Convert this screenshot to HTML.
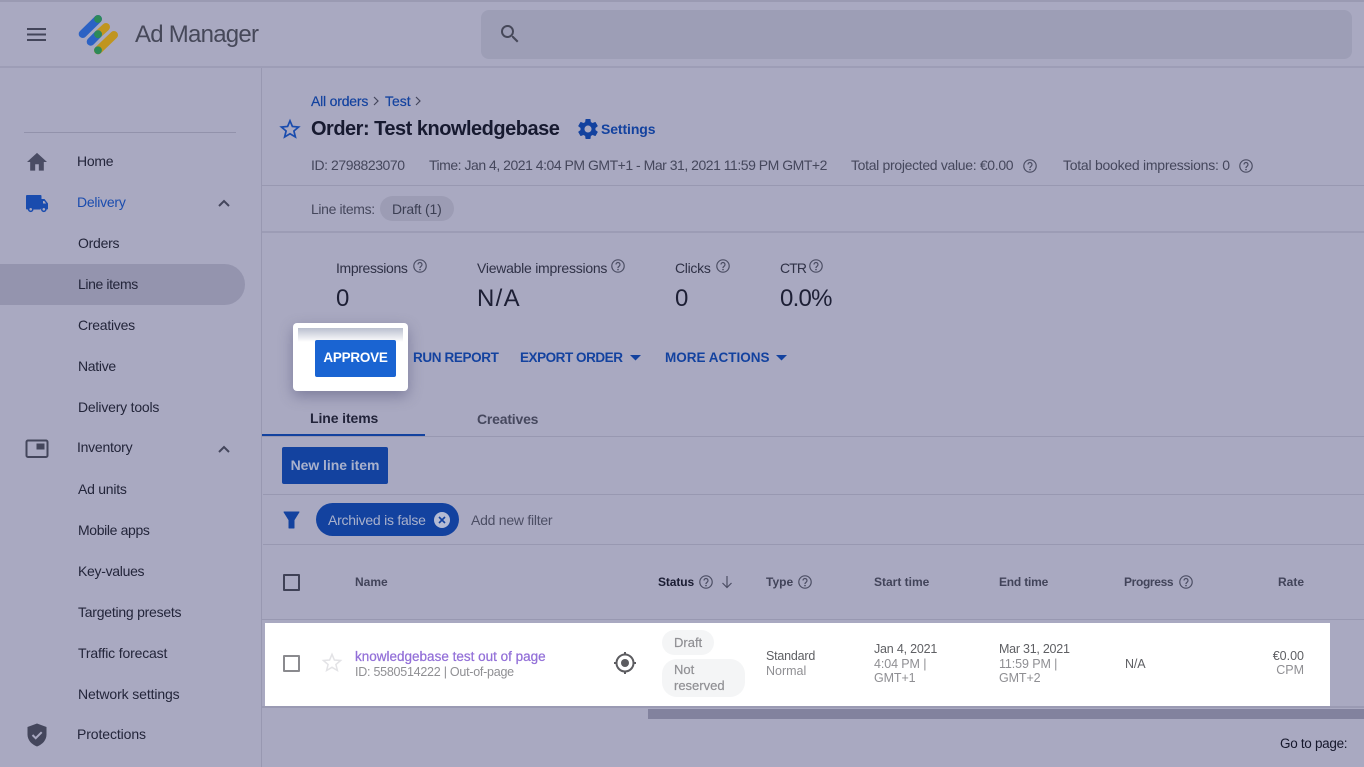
<!DOCTYPE html>
<html><head><meta charset="utf-8"><style>
html,body{margin:0;padding:0;width:1364px;height:767px;overflow:hidden;background:#a9a9c1}
body{position:relative;font-family:"Liberation Sans",sans-serif;color:#3c3f53}
.t{position:absolute;white-space:nowrap;line-height:20px;font-size:14px}
.b{position:absolute}
svg{position:absolute;overflow:visible}
.nav{color:#23253a;font-size:14px;letter-spacing:-.25px}
.bl{color:#13429f}
.bd{font-weight:bold}
.hd{font-size:12px;font-weight:bold;color:#42445a}
.g{color:#8f8f93;font-size:12.5px}
.dk{color:#5f6064;font-size:12.5px}
</style></head><body>
<div class="b" style="left:0;top:0;width:1364px;height:2px;background:#9a9ab2"></div>
<div class="b" style="left:0;top:66px;width:1364px;height:2px;background:#9d9db6"></div>
<div class="b" style="left:261px;top:68px;width:1px;height:699px;background:#9898b1"></div>
<div class="b" style="left:481px;top:10px;width:871px;height:49px;border-radius:8px;background:#9d9eb6"></div>
<!-- menu -->
<svg style="left:27px;top:28px" width="20" height="13"><path d="M0 1h19M0 6.500h19M0 12h19" stroke="#43455a" stroke-width="2"/></svg>
<!-- logo -->
<svg style="left:0;top:0" width="130" height="60"><path d="M98 34.300L106 27M98 50.300L114 35" stroke="#c0951f" stroke-width="8" stroke-linecap="round"/><path d="M82.700 34L98 19M90.700 41.700L98 34.300" stroke="#2c62c4" stroke-width="8" stroke-linecap="round"/><circle cx="98" cy="19" r="3.900" fill="#2d8a58"/><circle cx="98" cy="34.300" r="3.900" fill="#2d8a58"/><circle cx="98" cy="50.300" r="3.900" fill="#2d8a58"/></svg>
<div class="t" style="left:135px;top:21px;font-size:24px;line-height:28px;color:#464859;letter-spacing:-.75px">Ad Manager</div>
<!-- search -->
<svg style="left:498px;top:22px" width="24" height="24" viewBox="0 0 24 24"><path d="M15.500 14h-.79l-.28-.27A6.470 6.470 0 0 0 16 9.500 6.500 6.500 0 1 0 9.500 16c1.610 0 3.090-.59 4.230-1.570l.27.28v.79l5 4.990L20.490 19l-4.990-5zm-6 0C7.010 14 5 11.990 5 9.500S7.010 5 9.500 5 14 7.010 14 9.500 11.990 14 9.500 14z" fill="#464859"/></svg>
<!-- sidebar -->
<div class="b" style="left:24px;top:132px;width:212px;height:1px;background:#9292ab"></div>
<svg style="left:27px;top:152px" width="20" height="20" viewBox="1 2.500 22 20"><path d="M10 22v-7h4v7h5.500v-9.500H23L12 2.500 1 12.500h3.500V22z" fill="#4a4c64"/></svg>
<div class="t nav" style="left:77px;top:151px">Home</div>
<svg style="left:25px;top:194px" width="24" height="20" viewBox="0 0 24 20"><path d="M2 1h13.500q1 0 1 1v3h3l3.500 4.500v5q0 1-1 1h-1a2.900 2.900 0 0 0-5.500 0H8.500a2.900 2.900 0 0 0-5.500 0H2q-1 0-1-1V2q0-1 1-1z" fill="#1a4cae"/><circle cx="5.700" cy="15.300" r="2.800" fill="#1a4cae"/><circle cx="18.800" cy="15.300" r="2.800" fill="#1a4cae"/><circle cx="5.700" cy="15.300" r="1.300" fill="#a9a9c1"/><circle cx="18.800" cy="15.300" r="1.300" fill="#a9a9c1"/><path d="M18 7h1.300l1.800 2.500H18z" fill="#a9a9c1"/></svg>
<div class="t nav" style="left:77px;top:192px;color:#1a4cae">Delivery</div>
<svg style="left:218px;top:199px" width="12" height="8"><path d="M1 7l5-5 5 5" fill="none" stroke="#44465c" stroke-width="2"/></svg>
<div class="t nav" style="left:78px;top:233px">Orders</div>
<div class="b" style="left:0;top:264px;width:245px;height:41px;background:#9494ae;border-radius:0 21px 21px 0"></div>
<div class="t nav" style="left:78px;top:274px;letter-spacing:-.4px">Line items</div>
<div class="t nav" style="left:78px;top:315px">Creatives</div>
<div class="t nav" style="left:78px;top:356px;letter-spacing:-.3px">Native</div>
<div class="t nav" style="left:78px;top:397px;letter-spacing:-.2px">Delivery tools</div>
<svg style="left:25px;top:439px" width="24" height="20"><rect x="1.500" y="1.500" width="21" height="16.500" rx="1.500" fill="none" stroke="#44465c" stroke-width="2"/><rect x="11.500" y="4.500" width="8" height="6" fill="#44465c"/></svg>
<div class="t nav" style="left:77px;top:437px">Inventory</div>
<svg style="left:218px;top:445px" width="12" height="8"><path d="M1 7l5-5 5 5" fill="none" stroke="#44465c" stroke-width="2"/></svg>
<div class="t nav" style="left:78px;top:479px">Ad units</div>
<div class="t nav" style="left:78px;top:520px;letter-spacing:-.36px">Mobile apps</div>
<div class="t nav" style="left:78px;top:561px;letter-spacing:-.3px">Key-values</div>
<div class="t nav" style="left:78px;top:602px;letter-spacing:-.24px">Targeting presets</div>
<div class="t nav" style="left:78px;top:643px;letter-spacing:-.16px">Traffic forecast</div>
<div class="t nav" style="left:78px;top:684px;letter-spacing:-.12px">Network settings</div>
<svg style="left:27px;top:723px" width="20" height="24" viewBox="0 0 20 24"><path d="M10 .5L19.500 4v7.500c0 5.500-4 10-9.500 12C4.500 21.500.500 17 .500 11.500V4z" fill="#44465c"/><path d="M5.500 12l3.200 3.200 6-6" fill="none" stroke="#a9a9c1" stroke-width="2"/></svg>
<div class="t nav" style="left:77px;top:724px;letter-spacing:-.1px">Protections</div>
<!-- header -->
<div class="t bl" style="left:311px;top:91px;letter-spacing:-.2px;-webkit-text-stroke:.2px #13429f">All orders</div>
<svg style="left:373px;top:96px" width="7" height="10"><path d="M1 1l4 4-4 4" fill="none" stroke="#44465c" stroke-width="1.200"/></svg>
<div class="t bl" style="left:385px;top:91px;-webkit-text-stroke:.2px #13429f">Test</div>
<svg style="left:415px;top:96px" width="7" height="10"><path d="M1 1l4 4-4 4" fill="none" stroke="#44465c" stroke-width="1.200"/></svg>
<svg style="left:280px;top:119px" width="20" height="20" viewBox="0 0 20 20"><path d="M10 1.800l2.400 5.700 6.200.5-4.700 4 1.500 6L10 14.800 4.600 18l1.500-6-4.700-4 6.200-.5z" fill="none" stroke="#1a4cae" stroke-width="1.700"/></svg>
<div class="t" style="left:311px;top:116px;font-size:20px;line-height:26px;font-weight:bold;color:#171a30;letter-spacing:-.5px">Order: Test knowledgebase</div>
<svg style="left:576px;top:117px" width="24" height="24" viewBox="0 0 24 24"><path d="M19.430 12.980c.04-.32.070-.64.070-.98s-.03-.66-.07-.98l2.110-1.650c.19-.15.240-.42.120-.64l-2-3.460c-.12-.22-.39-.3-.61-.22l-2.490 1c-.52-.4-1.080-.73-1.690-.98l-.38-2.650A.488.488 0 0 0 14 2h-4c-.25 0-.46.180-.49.420l-.38 2.650c-.61.25-1.170.59-1.690.98l-2.490-1c-.23-.09-.49 0-.61.220l-2 3.460c-.13.220-.07.490.12.640l2.110 1.650c-.04.320-.07.650-.07.980s.03.660.07.980l-2.110 1.650c-.19.150-.24.420-.12.640l2 3.460c.12.220.39.300.61.220l2.490-1c.52.400 1.080.730 1.690.980l.38 2.650c.03.240.240.420.490.420h4c.25 0 .46-.18.490-.42l.38-2.650c.61-.25 1.170-.59 1.690-.98l2.490 1c.23.090.49 0 .61-.22l2-3.460c.12-.22.070-.49-.12-.64l-2.110-1.650zM12 15.500c-1.930 0-3.500-1.570-3.500-3.500s1.570-3.500 3.500-3.500 3.500 1.570 3.500 3.500-1.570 3.500-3.500 3.500z" fill="#13429f"/></svg>
<div class="t bl bd" style="left:601px;top:119px;font-size:14px;letter-spacing:-.1px">Settings</div>
<div class="t" style="left:311px;top:155px;color:#45475c;letter-spacing:-.43px">ID: 2798823070</div>
<div class="t" style="left:429px;top:155px;color:#45475c;letter-spacing:-.48px">Time: Jan 4, 2021 4:04 PM GMT+1 - Mar 31, 2021 11:59 PM GMT+2</div>
<div class="t" style="left:851px;top:155px;color:#45475c;letter-spacing:-.32px">Total projected value: €0.00</div>
<svg style="left:1023px;top:159px" width="14" height="14"><use href="#q"/></svg>
<div class="t" style="left:1063px;top:155px;color:#45475c;letter-spacing:-.25px">Total booked impressions: 0</div>
<svg style="left:1239px;top:159px" width="14" height="14"><use href="#q"/></svg>
<svg width="0" height="0" style="left:0;top:0"><defs>
<g id="q"><circle cx="7" cy="7" r="6.200" fill="none" stroke="#4c4e64" stroke-width="1.200"/><path d="M5 5.500a2 2 0 1 1 3.200 1.600C7.400 7.700 7 8 7 9" fill="none" stroke="#4c4e64" stroke-width="1.200"/><circle cx="7" cy="10.600" r=".8" fill="#4c4e64"/></g>
</defs></svg>
<div class="b" style="left:262px;top:185px;width:1102px;height:1px;background:#9898b1"></div>
<div class="t" style="left:311px;top:199px;color:#45475c;letter-spacing:-.36px">Line items:</div>
<div class="b" style="left:380px;top:196px;width:74px;height:25px;border-radius:13px;background:#9c9cb4"></div>
<div class="t" style="left:392px;top:199px;color:#3c3f53;letter-spacing:-.2px">Draft (1)</div>
<div class="b" style="left:262px;top:231px;width:1102px;height:2px;background:#9c9cb5"></div>
<!-- metrics -->
<div class="t" style="left:336px;top:258px;color:#2f3146;letter-spacing:-.36px">Impressions</div>
<svg style="left:413px;top:259px" width="14" height="14"><use href="#q"/></svg>
<div class="t" style="left:477px;top:258px;color:#2f3146;letter-spacing:-.25px">Viewable impressions</div>
<svg style="left:611px;top:259px" width="14" height="14"><use href="#q"/></svg>
<div class="t" style="left:675px;top:258px;color:#2f3146;letter-spacing:-.3px">Clicks</div>
<svg style="left:716px;top:259px" width="14" height="14"><use href="#q"/></svg>
<div class="t" style="left:780px;top:258px;color:#2f3146;letter-spacing:-.9px">CTR</div>
<svg style="left:809px;top:259px" width="14" height="14"><use href="#q"/></svg>
<div class="t" style="left:336px;top:284px;font-size:24px;line-height:30px;color:#1d1f35">0</div>
<div class="t" style="left:477px;top:284px;font-size:24px;line-height:30px;color:#1d1f35;letter-spacing:1.300px">N/A</div>
<div class="t" style="left:675px;top:284px;font-size:24px;line-height:30px;color:#1d1f35">0</div>
<div class="t" style="left:780px;top:284px;font-size:24px;line-height:30px;color:#1d1f35;letter-spacing:-.75px">0.0%</div>
<!-- approve -->
<div class="b" style="left:293px;top:323px;width:115px;height:68px;background:#fff;border-radius:4px;box-shadow:0 5px 14px rgba(70,70,110,.45)"></div>
<div class="b" style="left:298px;top:328px;width:105px;height:14px;background:linear-gradient(#b9bfcf,#fff)"></div>
<div class="b" style="left:315px;top:340px;width:81px;height:37px;background:#1a64d2;border-radius:2px"></div>
<div class="t" style="left:315px;top:348px;width:81px;text-align:center;color:#fff;font-weight:bold;font-size:13.500px;letter-spacing:-.25px">APPROVE</div>
<div class="t bl bd" style="left:413px;top:348px;font-size:13.500px;letter-spacing:-.37px">RUN REPORT</div>
<div class="t bl bd" style="left:520px;top:348px;font-size:13.500px;letter-spacing:-.46px">EXPORT ORDER</div>
<svg style="left:630px;top:355px" width="11" height="6"><path d="M0 0h11L5.500 5.500z" fill="#13429f"/></svg>
<div class="t bl bd" style="left:665px;top:348px;font-size:13.500px">MORE ACTIONS</div>
<svg style="left:776px;top:355px" width="11" height="6"><path d="M0 0h11L5.500 5.500z" fill="#13429f"/></svg>
<!-- tabs -->
<div class="t bd" style="left:310px;top:408px;color:#22243a;letter-spacing:-.1px">Line items</div>
<div class="t bd" style="left:477px;top:409px;color:#46485e;letter-spacing:-.2px">Creatives</div>
<div class="b" style="left:262px;top:436px;width:1102px;height:1px;background:#9898b1"></div>
<div class="b" style="left:262px;top:434px;width:163px;height:2px;background:#13429f"></div>
<div class="b" style="left:282px;top:447px;width:106px;height:37px;background:#13429f;border-radius:2px"></div>
<div class="t bd" style="left:282px;top:455px;width:106px;text-align:center;color:#a9b1cc;letter-spacing:-.05px">New line item</div>
<div class="b" style="left:263px;top:494px;width:1101px;height:1px;background:#9898b1"></div>
<!-- filter -->
<svg style="left:283px;top:511px" width="17" height="18"><path d="M1 1h15L11 9v8H6V9z" fill="#13429f" stroke="#13429f" stroke-linejoin="round"/></svg>
<div class="b" style="left:316px;top:503px;width:143px;height:33px;background:#13429f;border-radius:17px"></div>
<div class="t" style="left:328px;top:510px;color:#a9b1cc;letter-spacing:-.25px">Archived is false</div>
<svg style="left:434px;top:512px" width="16" height="16"><circle cx="8" cy="8" r="8" fill="#b4bbd3"/><path d="M5 5l6 6M11 5l-6 6" stroke="#13429f" stroke-width="1.600"/></svg>
<div class="t" style="left:471px;top:510px;color:#4c4e64;letter-spacing:-.25px">Add new filter</div>
<div class="b" style="left:263px;top:544px;width:1101px;height:1px;background:#9898b1"></div>
<!-- table head -->
<div class="b" style="left:283px;top:574px;width:13px;height:13px;border:2px solid #3f4156;border-radius:1px"></div>
<div class="t hd" style="left:355px;top:572px">Name</div>
<div class="t hd" style="left:658px;top:572px;color:#1a1c32;letter-spacing:-.1px">Status</div>
<svg style="left:699px;top:575px" width="14" height="14"><use href="#q"/></svg>
<svg style="left:721px;top:576px" width="12" height="13"><path d="M6 0v11.500M1.500 7l4.500 4.500L10.500 7" fill="none" stroke="#4c4e64" stroke-width="1.200"/></svg>
<div class="t hd" style="left:766px;top:572px">Type</div>
<svg style="left:798px;top:575px" width="14" height="14"><use href="#q"/></svg>
<div class="t hd" style="left:874px;top:572px">Start time</div>
<div class="t hd" style="left:999px;top:572px;letter-spacing:-.2px">End time</div>
<div class="t hd" style="left:1124px;top:572px;letter-spacing:-.35px">Progress</div>
<svg style="left:1179px;top:575px" width="14" height="14"><use href="#q"/></svg>
<div class="t hd" style="left:1278px;top:572px">Rate</div>
<div class="b" style="left:262px;top:619px;width:1102px;height:1px;background:#9898b1"></div>
<!-- row -->
<div class="b" style="left:265px;top:623px;width:1065px;height:83px;background:#fff"></div>
<div class="b" style="left:283px;top:655px;width:13px;height:13px;border:2px solid #8a8a8e;border-radius:1px"></div>
<svg style="left:322px;top:652px" width="20" height="21" viewBox="0 0 20 20"><path d="M10 1.800l2.400 5.700 6.200.5-4.700 4 1.500 6L10 14.800 4.600 18l1.500-6-4.700-4 6.200-.5z" fill="none" stroke="#e3e3e6" stroke-width="1.500"/></svg>
<div class="t" style="left:355px;top:647px;color:#9370d8;font-size:13.500px;-webkit-text-stroke:.25px #9370d8">knowledgebase test out of page</div>
<div class="t g" style="left:355px;top:662px;letter-spacing:-.25px">ID: 5580514222 | Out-of-page</div>
<svg style="left:613px;top:651px" width="24" height="24" viewBox="0 0 24 24"><circle cx="12" cy="12" r="8.500" fill="none" stroke="#5c5c60" stroke-width="2"/><circle cx="12" cy="12" r="4" fill="#5c5c60"/><path d="M12 1v3M12 20v3M1 12h3M20 12h3" stroke="#5c5c60" stroke-width="2"/></svg>
<div class="b" style="left:662px;top:630px;width:52px;height:25px;border-radius:13px;background:#f4f5f6"></div>
<div class="t" style="left:674px;top:633px;color:#909094;font-size:13px;-webkit-text-stroke:.2px #909094">Draft</div>
<div class="b" style="left:662px;top:659px;width:83px;height:38px;border-radius:15px;background:#f4f5f6"></div>
<div class="t" style="left:674px;top:660px;color:#909094;font-size:13px;-webkit-text-stroke:.2px #909094">Not</div>
<div class="t" style="left:674px;top:676px;color:#909094;font-size:13px;-webkit-text-stroke:.2px #909094">reserved</div>
<div class="t dk" style="left:766px;top:646px;letter-spacing:-.2px">Standard</div>
<div class="t g" style="left:766px;top:661px">Normal</div>
<div class="t dk" style="left:874px;top:639px;letter-spacing:-.2px">Jan 4, 2021</div>
<div class="t g" style="left:874px;top:654px;letter-spacing:-.1px">4:04 PM |</div>
<div class="t g" style="left:874px;top:668px;letter-spacing:-.1px">GMT+1</div>
<div class="t dk" style="left:999px;top:639px;letter-spacing:-.25px">Mar 31, 2021</div>
<div class="t g" style="left:999px;top:654px;letter-spacing:-.1px">11:59 PM |</div>
<div class="t g" style="left:999px;top:668px;letter-spacing:-.1px">GMT+2</div>
<div class="t dk" style="left:1125px;top:654px;letter-spacing:-.1px">N/A</div>
<div class="t dk" style="left:1204px;width:100px;text-align:right;top:646px">€0.00</div>
<div class="t g" style="left:1204px;width:100px;text-align:right;top:660px">CPM</div>
<!-- scrollbar -->
<div class="b" style="left:262px;top:706px;width:1102px;height:2px;background:#9a9ab3"></div>
<div class="b" style="left:648px;top:709px;width:716px;height:10px;background:#82829e"></div>
<div class="t" style="left:1280px;top:734px;color:#16182c;font-size:13.500px;letter-spacing:-.3px">Go to page:</div>
</body></html>
